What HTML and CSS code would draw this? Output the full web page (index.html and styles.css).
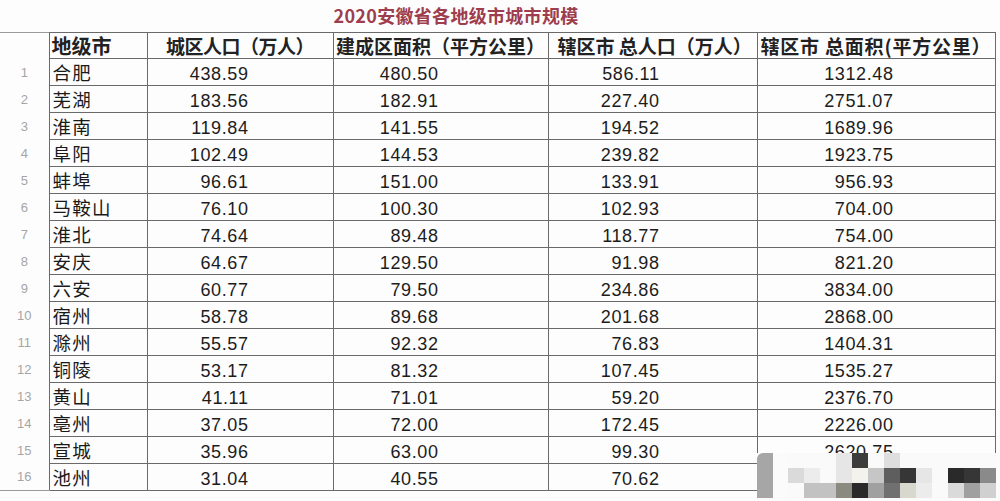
FILE: index.html
```html
<!DOCTYPE html>
<html lang="zh">
<head>
<meta charset="utf-8">
<title>2020安徽省各地级市城市规模</title>
<link rel="stylesheet" href="styles.css">
</head>
<body>
<div class="sheet">
  <div class="title">2020安徽省各地级市城市规模</div>
  <table class="grid">
    <colgroup>
      <col class="c-idx"><col class="c-city"><col class="c-a"><col class="c-b"><col class="c-c"><col class="c-d">
    </colgroup>
    <thead>
      <tr>
        <th class="idx"></th>
        <th class="city-h">地级市</th>
        <th class="a-h">城区人口（万人）</th>
        <th>建成区面积（平方公里）</th>
        <th class="wide-h">辖区市 总人口（万人）</th>
        <th class="last-h">辖区市 总面积(平方公里）</th>
      </tr>
    </thead>
    <tbody>
      <tr><td class="idx">1</td><td class="city">合肥</td><td class="n2">438.59</td><td class="n3">480.50</td><td class="n4">586.11</td><td class="n5">1312.48</td></tr>
      <tr><td class="idx">2</td><td class="city">芜湖</td><td class="n2">183.56</td><td class="n3">182.91</td><td class="n4">227.40</td><td class="n5">2751.07</td></tr>
      <tr><td class="idx">3</td><td class="city">淮南</td><td class="n2">119.84</td><td class="n3">141.55</td><td class="n4">194.52</td><td class="n5">1689.96</td></tr>
      <tr><td class="idx">4</td><td class="city">阜阳</td><td class="n2">102.49</td><td class="n3">144.53</td><td class="n4">239.82</td><td class="n5">1923.75</td></tr>
      <tr><td class="idx">5</td><td class="city">蚌埠</td><td class="n2">96.61</td><td class="n3">151.00</td><td class="n4">133.91</td><td class="n5">956.93</td></tr>
      <tr><td class="idx">6</td><td class="city">马鞍山</td><td class="n2">76.10</td><td class="n3">100.30</td><td class="n4">102.93</td><td class="n5">704.00</td></tr>
      <tr><td class="idx">7</td><td class="city">淮北</td><td class="n2">74.64</td><td class="n3">89.48</td><td class="n4">118.77</td><td class="n5">754.00</td></tr>
      <tr><td class="idx">8</td><td class="city">安庆</td><td class="n2">64.67</td><td class="n3">129.50</td><td class="n4">91.98</td><td class="n5">821.20</td></tr>
      <tr><td class="idx">9</td><td class="city">六安</td><td class="n2">60.77</td><td class="n3">79.50</td><td class="n4">234.86</td><td class="n5">3834.00</td></tr>
      <tr><td class="idx">10</td><td class="city">宿州</td><td class="n2">58.78</td><td class="n3">89.68</td><td class="n4">201.68</td><td class="n5">2868.00</td></tr>
      <tr><td class="idx">11</td><td class="city">滁州</td><td class="n2">55.57</td><td class="n3">92.32</td><td class="n4">76.83</td><td class="n5">1404.31</td></tr>
      <tr><td class="idx">12</td><td class="city">铜陵</td><td class="n2">53.17</td><td class="n3">81.32</td><td class="n4">107.45</td><td class="n5">1535.27</td></tr>
      <tr><td class="idx">13</td><td class="city">黄山</td><td class="n2">41.11</td><td class="n3">71.01</td><td class="n4">59.20</td><td class="n5">2376.70</td></tr>
      <tr><td class="idx">14</td><td class="city">亳州</td><td class="n2">37.05</td><td class="n3">72.00</td><td class="n4">172.45</td><td class="n5">2226.00</td></tr>
      <tr><td class="idx">15</td><td class="city">宣城</td><td class="n2">35.96</td><td class="n3">63.00</td><td class="n4">99.30</td><td class="n5">2620.75</td></tr>
      <tr class="lastrow"><td class="idx">16</td><td class="city">池州</td><td class="n2">31.04</td><td class="n3">40.55</td><td class="n4">70.62</td><td class="n5"></td></tr>
    </tbody>
  </table>
</div>
<div class="mosaic">
  <div class="bar"></div>
  <div class="tiles">
    <i class="w"></i><i class="w"></i><i class="w"></i><i class="t1"></i><i class="t2"></i><i class="w"></i><i class="t3"></i><i class="w"></i><i class="w"></i><i class="w"></i><i class="w"></i><i class="w"></i><i class="w"></i>
    <i class="t4"></i><i class="t5"></i><i class="w"></i><i class="t1"></i><i class="t6"></i><i class="t7"></i><i class="t8"></i><i class="t9"></i><i class="t1"></i><i class="w"></i><i class="t10"></i><i class="t9"></i><i class="t11"></i>
    <i class="w"></i><i class="t12"></i><i class="t12"></i><i class="t13"></i><i class="t10"></i><i class="t14"></i><i class="t15"></i><i class="t16"></i><i class="t5"></i><i class="w"></i><i class="t4"></i><i class="t14"></i><i class="t17"></i>
  </div>
</div>
</body>
</html>
```

FILE: styles.css
```css
html, body {
  margin: 0;
  padding: 0;
  background: #fdfdfd;
}

body {
  width: 1000px;
  height: 501px;
  overflow: hidden;
  font-family: "Liberation Sans", "Noto Sans CJK SC", sans-serif;
  color: #1c1c1c;
}

.sheet {
  width: 995px;
}

.title {
  height: 32px;
  box-sizing: border-box;
  padding: 5px 83px 0 0;
  text-align: center;
  font-family: "Noto Sans CJK SC", sans-serif;
  font-size: 18px;
  font-weight: 700;
  line-height: 20px;
  color: #9e3d4e;
  letter-spacing: 0.3px;
}

.grid {
  border-collapse: collapse;
  table-layout: fixed;
  width: 995px;
}

.c-idx { width: 49px; }
.c-city { width: 98px; }
.c-a { width: 186px; }
.c-b { width: 215px; }
.c-c { width: 209px; }
.c-d { width: 238px; }

.grid th,
.grid td {
  border: 1px solid #6a6a6a;
  padding: 0;
  line-height: 1;
  white-space: nowrap;
}

.grid th {
  height: 25px;
  font-family: "Noto Sans CJK SC", sans-serif;
  font-size: 19px;
  font-weight: 700;
  color: #222;
  text-align: center;
}

.grid th.city-h {
  text-align: left;
  font-size: 20px;
  padding-left: 2px;
}

.grid th.a-h {
  letter-spacing: -0.5px;
}

.grid th.wide-h {
  text-align: left;
  padding-left: 9px;
}

.grid th.last-h {
  text-align: left;
  padding-left: 3px;
  letter-spacing: 0.8px;
}

.grid td {
  height: 26px;
  font-size: 18px;
  letter-spacing: 0.6px;
  vertical-align: middle;
}

.grid .idx {
  border-left: none;
  border-top: none;
  border-bottom: none;
  font-size: 13px;
  color: #a5a5a5;
  text-align: center;
  font-weight: 400;
  letter-spacing: 0;
}

.grid thead .idx {
  border-top: 1px solid #9a9a9a;
}

.grid .lastrow .idx {
  border-bottom: 1px solid #9a9a9a;
}

.grid td.city {
  font-family: "Noto Sans CJK SC", sans-serif;
  font-size: 18.5px;
  letter-spacing: 1.2px;
  padding-left: 3px;
  color: #1a1a1a;
}

.grid td.n2,
.grid td.n3,
.grid td.n4,
.grid td.n5 {
  height: 23px;
  text-align: right;
  padding-top: 3px;
}

.grid td.n2 { padding-right: 84px; }
.grid td.n3 { padding-right: 109px; }
.grid td.n4 { padding-right: 97px; }
.grid td.n5 { padding-right: 101px; }

.mosaic {
  position: absolute;
  left: 757px;
  top: 453px;
  width: 243px;
  height: 48px;
  background: #fbfbfb;
}

.bar {
  position: absolute;
  left: 0;
  top: 0;
  width: 16px;
  height: 45px;
  background: #a6a6a6;
  border-top-left-radius: 6px;
}

.tiles {
  position: absolute;
  left: 31px;
  top: 0;
  display: grid;
  grid-template-columns: repeat(13, 16px);
  grid-template-rows: repeat(3, 15px);
}

.tiles i { display: block; }
.tiles .w { background: #fafafa; }
.tiles .t1 { background: #e6e6e6; }
.tiles .t2 { background: #3c3c3c; }
.tiles .t3 { background: #dedede; }
.tiles .t4 { background: #dadada; }
.tiles .t5 { background: #ececec; }
.tiles .t6 { background: #f3f2ec; }
.tiles .t7 { background: #c6c6c6; }
.tiles .t8 { background: #5e5e5e; }
.tiles .t9 { background: #363636; }
.tiles .t10 { background: #2a2a2a; }
.tiles .t11 { background: #8a8a8a; }
.tiles .t12 { background: #c2c2c2; }
.tiles .t13 { background: #8b8a80; }
.tiles .t14 { background: #a0a0a0; }
.tiles .t15 { background: #707070; }
.tiles .t16 { background: #d8d8cf; }
.tiles .t17 { background: #d0d0d0; }
```
